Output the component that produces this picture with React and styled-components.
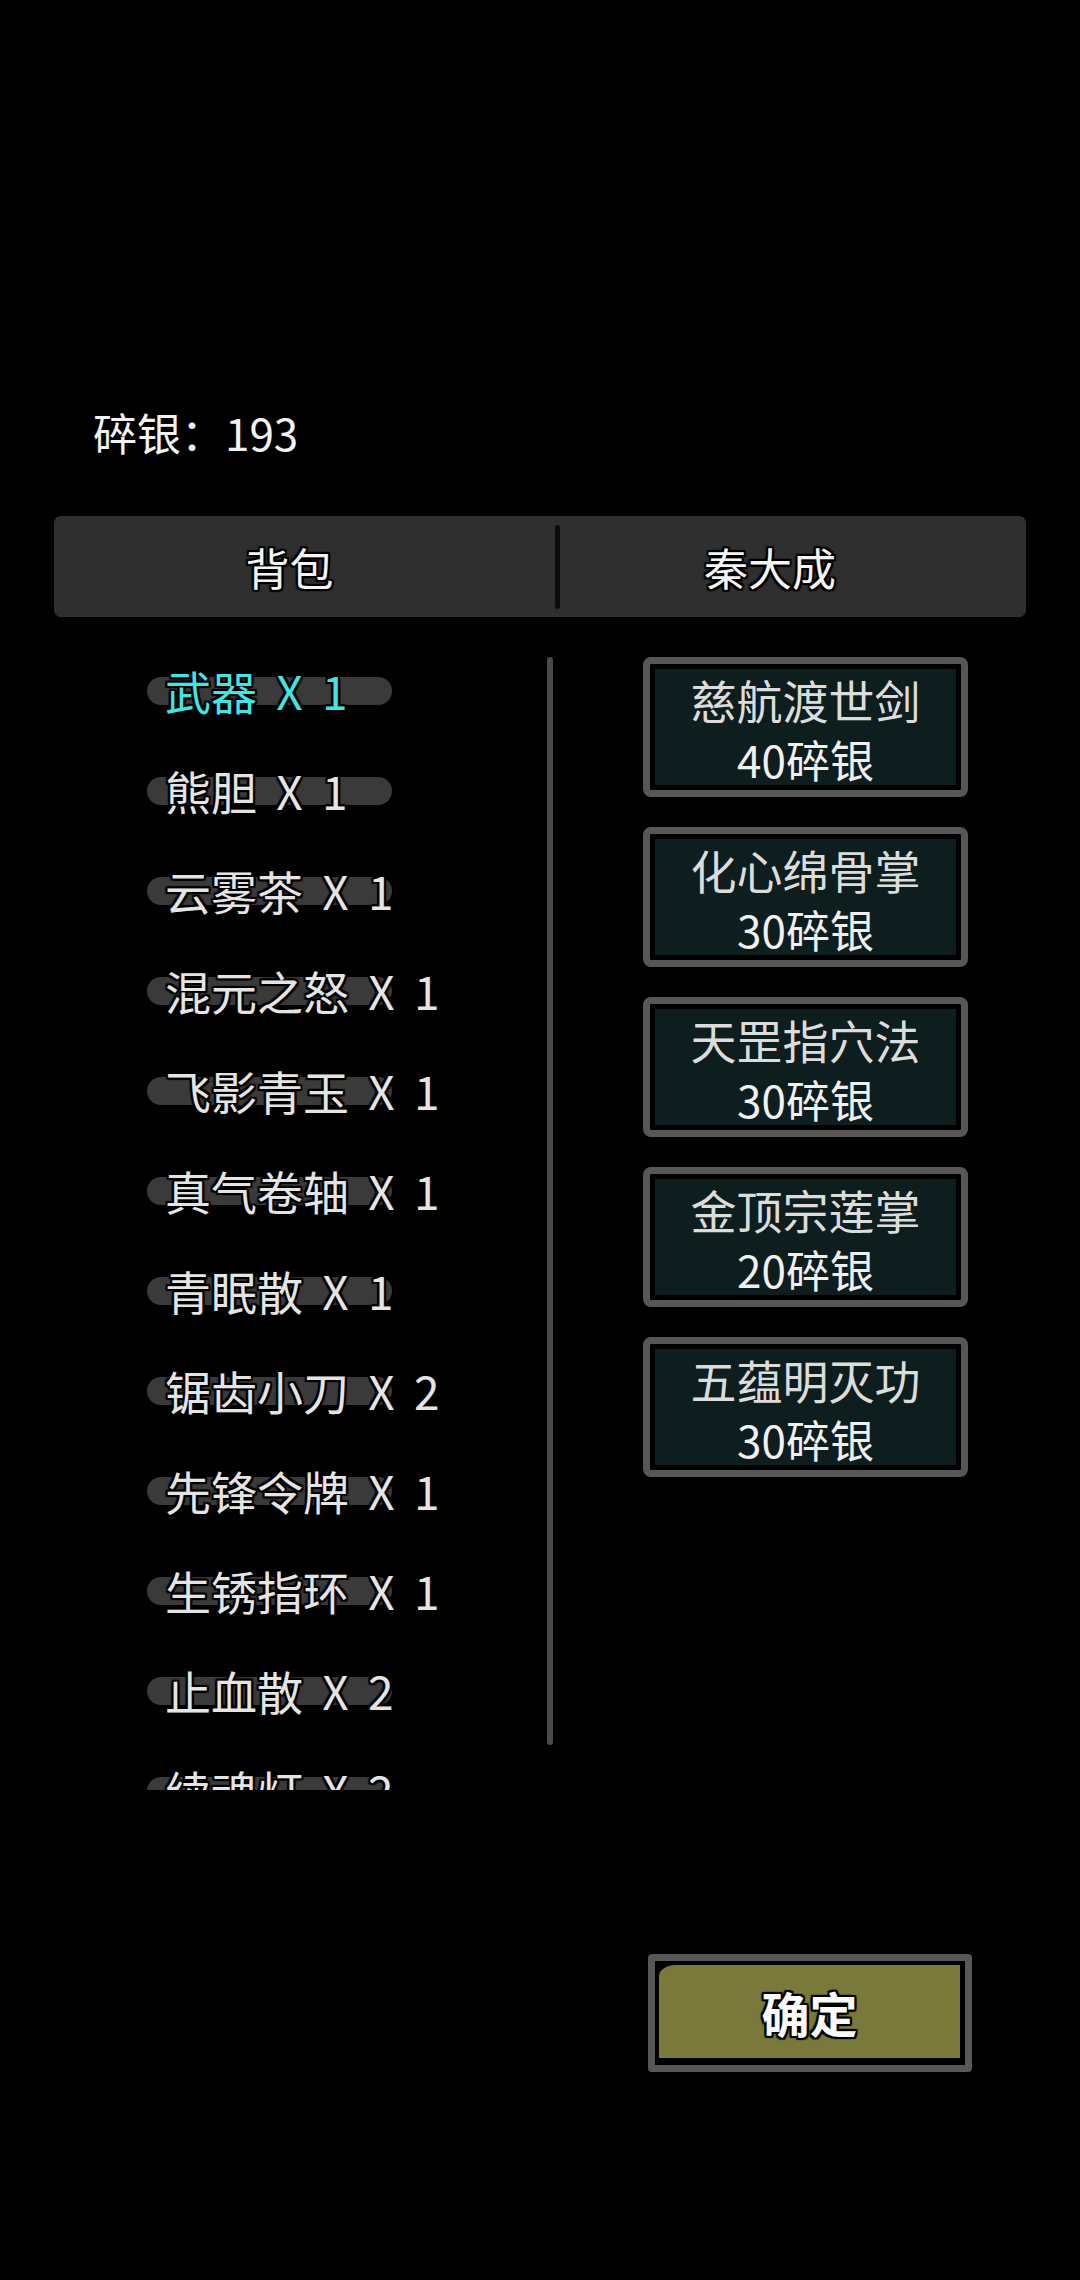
import React from 'react';
import styled, { createGlobalStyle } from 'styled-components';

const items = [
  { name: '武器', count: 1, active: true },
  { name: '熊胆', count: 1 },
  { name: '云雾茶', count: 1 },
  { name: '混元之怒', count: 1 },
  { name: '飞影青玉', count: 1 },
  { name: '真气卷轴', count: 1 },
  { name: '青眠散', count: 1 },
  { name: '锯齿小刀', count: 2 },
  { name: '先锋令牌', count: 1 },
  { name: '生锈指环', count: 1 },
  { name: '止血散', count: 2 },
  { name: '续魂灯', count: 2 },
];

const goods = [
  { name: '慈航渡世剑', price: 40 },
  { name: '化心绵骨掌', price: 30 },
  { name: '天罡指穴法', price: 30 },
  { name: '金顶宗莲掌', price: 20 },
  { name: '五蕴明灭功', price: 30 },
];

const App = () => {
  return (
    <Page>
      <GlobalStyle />
      <Silver>碎银：193</Silver>

      <Tabs>
        <Tab $shift={30}>背包</Tab>
        <TabDivider />
        <Tab $shift={46}>秦大成</Tab>
      </Tabs>

      <Body>
        <Bag>
          {items.map((item) => (
            <Item key={item.name} $active={item.active}>
              {item.name} X {item.count}
            </Item>
          ))}
        </Bag>
        <ScrollBar />
        <Shop>
          {goods.map((g) => (
            <Card key={g.name}>
              <CardName>{g.name}</CardName>
              <CardPrice>{g.price}碎银</CardPrice>
            </Card>
          ))}
        </Shop>
      </Body>

      <Footer>
        <ConfirmButton>
          <ConfirmFill>确定</ConfirmFill>
        </ConfirmButton>
      </Footer>
    </Page>
  );
};

export default App;

const GlobalStyle = createGlobalStyle`
  html, body {
    margin: 0;
    padding: 0;
    background: #000;
  }
  * {
    box-sizing: border-box;
  }
`;

const outline = `
  text-shadow:
    2px 0 0 #000, -2px 0 0 #000, 0 2px 0 #000, 0 -2px 0 #000,
    2px 2px 1px #000, -2px 2px 1px #000, 2px -2px 1px #000, -2px -2px 1px #000;
`;

const Page = styled.div`
  width: 1080px;
  height: 2280px;
  padding: 404px 54px 0;
  display: flex;
  flex-direction: column;
  background: #000;
  font-family: 'Noto Sans CJK SC', 'Noto Sans', sans-serif;
  color: #e6e6e6;
  overflow: hidden;
`;

const Silver = styled.div`
  padding-left: 39px;
  font-size: 44px;
  line-height: 56px;
  color: #f2f2f2;
`;

const Tabs = styled.div`
  margin-top: 56px;
  height: 101px;
  display: grid;
  grid-template-columns: 501px 5px 1fr;
  align-items: center;
  background: #2f2f2f;
  border-radius: 7px;
`;

const Tab = styled.div`
  display: flex;
  justify-content: center;
  padding-right: ${({ $shift }) => $shift}px;
  font-size: 44px;
  color: #f4f4f4;
  ${outline}
`;

const TabDivider = styled.div`
  height: 84px;
  background: #0c0c0c;
  border-radius: 3px;
`;

const Body = styled.div`
  margin-top: 23px;
  display: flex;
  align-items: flex-start;
`;

const Bag = styled.ul`
  width: 493px;
  height: 1150px;
  margin: 0;
  padding: 0;
  list-style: none;
  overflow: hidden;
`;

const Item = styled.li`
  position: relative;
  isolation: isolate;
  height: 100px;
  margin-left: 93px;
  padding-left: 18px;
  display: flex;
  align-items: center;
  font-size: 46px;
  word-spacing: 9px;
  white-space: pre;
  color: ${({ $active }) => ($active ? '#44e4e4' : '#e4e4e4')};
  ${outline}

  &::before {
    content: '';
    position: absolute;
    left: 0;
    top: 37px;
    width: 245px;
    height: 28px;
    border-radius: 14px;
    background: #3a3a3a;
    z-index: -1;
  }
`;

const ScrollBar = styled.div`
  width: 6px;
  height: 1088px;
  margin-top: 17px;
  border-radius: 3px;
  background: #4a4a4a;
`;

const Shop = styled.div`
  margin-top: 17px;
  margin-left: 90px;
  display: flex;
  flex-direction: column;
  gap: 30px;
`;

const Card = styled.div`
  width: 325px;
  height: 140px;
  padding-top: 4px;
  display: flex;
  flex-direction: column;
  align-items: center;
  justify-content: center;
  border: 7px solid #575757;
  border-radius: 8px;
  background: #0e1d1d;
  box-shadow: inset 0 0 0 5px #000;
`;

const CardName = styled.div`
  font-size: 46px;
  line-height: 60px;
  color: #dcdcdc;
`;

const CardPrice = styled.div`
  font-size: 44px;
  line-height: 60px;
  color: #f0f0f0;
`;

const Footer = styled.div`
  margin-top: 164px;
  display: flex;
  justify-content: flex-end;
  padding-right: 54px;
`;

const ConfirmButton = styled.button`
  width: 324px;
  height: 118px;
  padding: 4px 5px 7px 4px;
  border: 7px solid #575757;
  border-radius: 4px;
  background: #000;
  cursor: pointer;
  display: flex;
`;

const ConfirmFill = styled.div`
  flex: 1;
  display: flex;
  align-items: center;
  justify-content: center;
  background: #79793b;
  border-top-left-radius: 17px 11px;
  font-family: 'Noto Sans CJK SC', sans-serif;
  font-size: 48px;
  font-weight: 700;
  color: #fafafa;
  ${outline}
`;
